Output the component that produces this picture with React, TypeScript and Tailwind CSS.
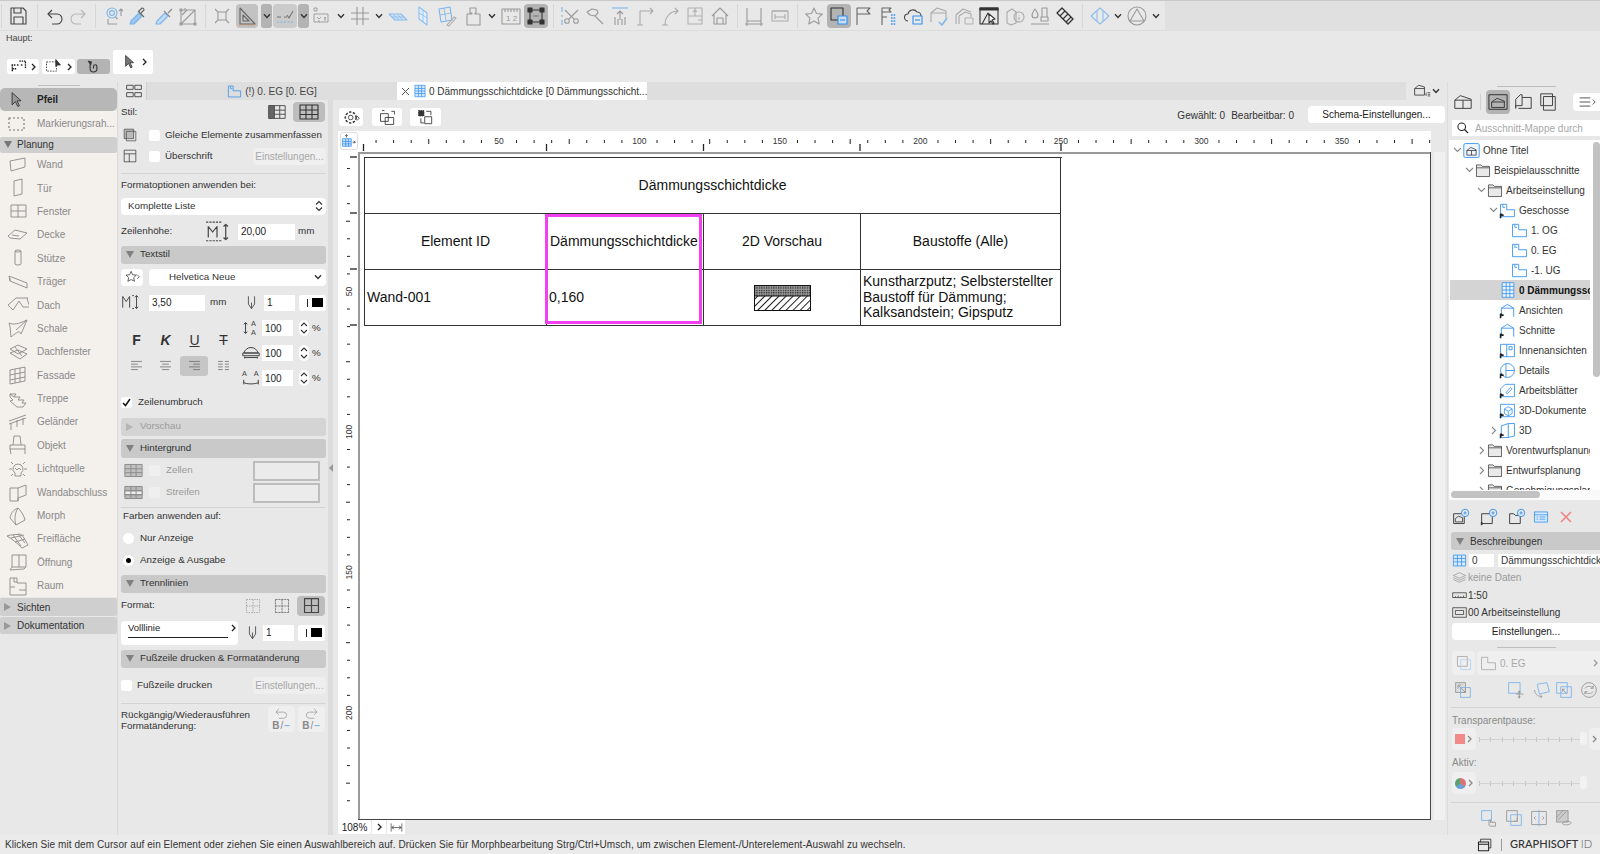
import React from "react";

const F = "font-['Liberation_Sans',Arial,sans-serif]";

// small svg helper, everything drawn on a 22 box unless told otherwise
function Ic({
  s = 22,
  c = "text-[#9a9a9a]",
  children,
  className = "",
}: {
  s?: number;
  c?: string;
  children: React.ReactNode;
  className?: string;
}) {
  return (
    <svg
      width={s}
      height={s}
      viewBox="0 0 22 22"
      fill="none"
      stroke="currentColor"
      strokeWidth="1.1"
      strokeLinejoin="round"
      className={`shrink-0 ${c} ${className}`}
    >
      {children}
    </svg>
  );
}

const BL = "#7db4ea";
const BB = "#2f8ff0";

function Chev({ className = "" }: { className?: string }) {
  return (
    <svg width="8" height="6" viewBox="0 0 8 6" fill="none" stroke="#333" strokeWidth="1.4" className={`shrink-0 ${className}`}>
      <path d="M1 1.2 4 4.4l3-3.2" />
    </svg>
  );
}

function Gt({ c = "#222", className = "" }: { c?: string; className?: string }) {
  return (
    <svg width="5" height="8" viewBox="0 0 5 8" fill="none" stroke={c} strokeWidth="1.3" className={`shrink-0 ${className}`}>
      <path d="m1 1 3 3-3 3" />
    </svg>
  );
}

function Sep({ className = "" }: { className?: string }) {
  return <div className={`w-px h-[24px] bg-[#d6d6d6] shrink-0 ${className}`} />;
}

function Drop({ className }: { className: string }) {
  return (
    <div className={`w-[11px] h-[24px] rounded-[3px] bg-[#b3b3b3] flex items-center justify-center shrink-0 ${className}`}>
      <Chev />
    </div>
  );
}

function TopToolbar() {
  return (
    <div className="h-[31px] flex border-t border-[#c9c9c9] shrink-0">
      <div className="w-[1165px] h-[30px] flex items-center border-b border-[#dcdcdc]">
        <Sep className="ml-[1px]" />
        <Ic c="text-[#444] ml-[5px]"><path d="M4 3h12l3 3v13H4z" /><path d="M7 3v5h7V3M7 19v-7h9v7" /></Ic>
        <Sep className="ml-[8px]" />
        <Ic c="text-[#444] ml-[5px]"><path d="M5 9h9a5 5 0 0 1 0 10H9" /><path d="M9 5 5 9l4 4" /></Ic>
        <Ic c="text-[#b5b5b5] ml-[3px]"><path d="M17 9H8a5 5 0 0 0 0 10h5" /><path d="m13 5 4 4-4 4" /></Ic>
        <Sep className="ml-[5px]" />
        <Ic c="text-[#9a9a9a] ml-[7px]"><circle cx="9" cy="8" r="5" stroke={BL} /><circle cx="9" cy="8" r="2.4" stroke={BL} /><path d="m12.5 12 2 2M18 11V4M16 6l2-2 2 2M5 14v5h9" /></Ic>
        <Ic c="text-[#666] ml-[2px]"><path d="m3 19 1-3 8-8 3 3-8 8z" fill="#9cc6f0" stroke={BL} /><path d="m11 6 6 6M14 8l3-3a1.8 1.8 0 0 0-2-2l-3 3" /></Ic>
        <Ic c="text-[#888] ml-[4px]"><path d="m3 19 1-3 8-8 3 3-8 8z" fill="#c0dcf6" stroke={BL} /><path d="m11 6 6 6M15 8l4-4" /></Ic>
        <Ic c="text-[#9a9a9a] ml-[2px]"><rect x="4" y="5" width="14" height="14" /><path d="m4 19 14-14M8 5V3M5 10l5-5" /><rect x="3" y="4" width="2" height="2" /><rect x="3" y="18" width="2" height="2" /><rect x="17" y="18" width="2" height="2" /></Ic>
        <Sep className="ml-[6px]" />
        <Ic c="text-[#9a9a9a] ml-[5px]"><rect x="7" y="7" width="8" height="8" /><path d="m4 4 3 3M18 4l-3 3M4 18l3-3M18 18l-3-3" /></Ic>
        <div className="w-[22px] h-[24px] ml-[3px] rounded-[4px] bg-[#c2c2c2] flex items-center justify-center shrink-0">
          <Ic c="text-[#666]"><path d="M4 3v16h15z" /><path d="M7 10v6h6z" /><path d="M3 20h16" stroke="#d98a4b" strokeDasharray="1.5 1.5" /></Ic>
        </div>
        <Drop className="ml-[3px]" />
        <div className="w-[24px] h-[24px] ml-[1px] rounded-[4px] bg-[#cbcbcb] flex items-center justify-center shrink-0">
          <Ic c="text-[#777]"><path d="M3 12h4M10 12h3M13 10l2 3 4-7" /><path d="M3 17h16" stroke={BL} strokeDasharray="2 1.5" /></Ic>
        </div>
        <Drop className="ml-[1px]" />
        <Ic c="text-[#999] ml-[3px]"><path d="M2 3h3v3H2zM2 9h14v8H2z" strokeWidth="0.9" /><path d="M5 12l2 2M9 12l-2 2M6 16h2M12 12l1 2 1-2M13 14v2M18 12v.1M18 15v.1" strokeWidth="0.9" /></Ic>
        <Chev className="ml-[3px]" />
        <Ic c="text-[#999] ml-[4px]"><path d="M2 8h18M2 14h18M8 2v18M14 2v18" /></Ic>
        <Chev className="ml-[4px]" />
        <Ic c="text-[#8cbdee] ml-[4px]"><path d="M2 9h12l6 6H8z" fill="#cfe2f6" /><path d="M5 12h12M6 9l6 6M10 9l6 6" strokeWidth=".8" /></Ic>
        <Ic c="text-[#8cbdee] ml-[3px]"><path d="M7 2l8 6v12l-8-6z" fill="#e3eefa" /><path d="M11 5v12M7 8l8 5" strokeWidth=".8" /></Ic>
        <Ic c="text-[#aaa] ml-[1px]"><path d="M4 4l11-2 2 13-11 2z" stroke={BL} /><path d="M9 3l2 13M5 10l11-2" stroke={BL} strokeWidth=".8" /><path d="m12 20 7-8 2 1-7 8z" /></Ic>
        <Ic c="text-[#9a9a9a] ml-[5px]"><path d="M8 3h6v5h-1v1h5v11H5V9h5V8H8z" /></Ic>
        <Chev className="ml-[4px]" />
        <Ic c="text-[#9a9a9a] ml-[4px]"><rect x="2" y="4" width="18" height="15" /><path d="M5 4v3M8 4v3M11 4v3M14 4v3M17 4v3" /><text x="6" y="16" fontSize="8" stroke="none" fill="currentColor">1 2</text></Ic>
        <div className="w-[24px] h-[24px] ml-[2px] rounded-[4px] bg-[#b3b3b3] flex items-center justify-center shrink-0">
          <Ic c="text-[#333]"><rect x="5" y="5" width="12" height="12" /><rect x="3" y="3" width="4" height="4" fill="#333" /><rect x="15" y="3" width="4" height="4" fill="#333" /><rect x="3" y="15" width="4" height="4" fill="#333" /><rect x="15" y="15" width="4" height="4" fill="#333" /><path d="M8 11h6" stroke="#7a7a7a" /></Ic>
        </div>
        <Sep className="ml-[5px]" />
        <Ic c="text-[#9a9a9a] ml-[5px]"><path d="M3 2v5M3 10v2M3 15v5" stroke={BL} /><circle cx="8" cy="16" r="2.3" /><circle cx="17" cy="16" r="2.3" /><path d="m10 14 9-9M15 14 6 5" /></Ic>
        <Ic c="text-[#9a9a9a] ml-[3px]"><path d="m8 4 5 1 1 3-3 3-5-1-3-3zM11 11l8 8" /></Ic>
        <Ic c="text-[#9a9a9a] ml-[3px]"><path d="M3 3h16" stroke={BL} /><path d="M11 15V6M8 9l3-3 3 3M6 12v8M9 14v6M13 14v6M16 12v8" /></Ic>
        <Ic c="text-[#aaa] ml-[3px]"><path d="M6 20V6h13M16 3l3 3-3 3M3 20h6" /></Ic>
        <Ic c="text-[#aaa] ml-[3px]"><path d="M6 20c0-8 5-14 13-14M16 3l3 3-3 3M3 20h6" /></Ic>
        <Ic c="text-[#b0b0b0] ml-[3px]"><rect x="4" y="3" width="14" height="16" /><path d="M4 11h14M11 3v8M11 9V5M9 7l2-2 2 2M14 15h4" /></Ic>
        <Ic c="text-[#9a9a9a] ml-[3px]"><path d="M3 11 11 3l8 8M5 9v10h12V9M8 13h6v6H8z" /></Ic>
        <Sep className="ml-[6px]" />
        <Ic c="text-[#9a9a9a] ml-[5px]"><path d="M4 3v13h14V3M4 19h14M2 19h2M18 19h2M4 16v5M18 16v5M7 19l-2 0" /></Ic>
        <Ic c="text-[#aaa] ml-[4px]"><rect x="3" y="6" width="16" height="10" /><path d="M6 9v5M16 9v5M6 12h10M3 6h16" /></Ic>
        <Sep className="ml-[6px]" />
        <Ic c="text-[#9a9a9a] ml-[5px]"><path d="m11 3 2.5 5.500 5.800.6-4.300 4 1.200 5.800L11 16l-5.200 2.900L7 13.100l-4.300-4 5.800-.6z" /></Ic>
        <div className="w-[24px] h-[24px] ml-[2px] rounded-[4px] bg-[#b3b3b3] flex items-center justify-center shrink-0">
          <Ic c="text-[#333]"><rect x="3" y="3" width="12" height="12" /><rect x="10" y="11" width="9" height="8" fill="#c9def5" stroke={BB} /><path d="M12 15h5" stroke={BB} /></Ic>
        </div>
        <Ic c="text-[#666] ml-[1px]"><path d="M5 20V3h13l-3 3 3 3H5" /></Ic>
        <Ic c="text-[#666] ml-[3px]"><path d="M5 20V3h9l-2 2 2 2H5M5 12h5" /><path d="M14 10h5M14 13h5M14 16h5M14 19h5" stroke={BB} strokeWidth="1.6" strokeDasharray="1.6 1" /></Ic>
        <Ic c="text-[#444] ml-[4px]"><path d="M5 16a3.500 3.500 0 0 1 0-7 5 5 0 0 1 9-2 4 4 0 0 1 4 4" /><rect x="10" y="11" width="9" height="8" stroke={BB} /><path d="M12 15h5" stroke={BB} /></Ic>
        <Ic c="text-[#aaa] ml-[3px]"><path d="M3 17V8l6-5 9 3v7M3 8h15" /><path d="m11 17 3 3 5-7" stroke={BL} strokeWidth="1.5" /></Ic>
        <Ic c="text-[#aaa] ml-[3px]"><path d="M3 19v-9l7-6 8 3M6 19v-8l6-4 6 2v3" /><rect x="12" y="13" width="8" height="6" strokeWidth=".9" /></Ic>
        <Ic c="text-[#333] ml-[3px]"><rect x="2" y="3" width="18" height="16" /><path d="M2 3h18v2H2z" fill="#333" /><path d="m4 19 6-11 6 11" /><path d="m11 9 6 5-3 1 2 3-1 1-2-3-2 2z" fill="#fff" /></Ic>
        <Ic c="text-[#aaa] ml-[4px]"><path d="M3 7l5-3 4 3v11l-5 2-4-2z" /><circle cx="15" cy="12" r="5" /><path d="M15 10v.5M15 12v3" /></Ic>
        <Ic c="text-[#999] ml-[3px]"><path d="M6 4c-2 3-3 4-3 6a3 3 0 0 0 6 0c0-2-1-3-3-6z" /><path d="M13 12V3h5v9zM12 12h7v4h-7zM2 19h18" /></Ic>
        <Ic c="text-[#333] ml-[3px]"><path d="m3 8 5-5 11 11-5 5z" strokeWidth="1.400" /><path d="m6 11 5-5M9 14l5-5M12 17l5-5" /></Ic>
        <Sep className="ml-[6px]" />
        <Ic c="text-[#8cbdee] ml-[6px]"><path d="m2 11 9-8 9 8-9 8z" /><path d="M8 6v10M14 6v10" /></Ic>
        <Chev className="ml-[3px]" />
        <Ic c="text-[#9a9a9a] ml-[4px]"><circle cx="11" cy="11" r="9" /><path d="m11 4 7 12H4z" /></Ic>
        <Chev className="ml-[4px]" />
      </div>
      <div className="flex-1 bg-[#e0e0e0]" />
    </div>
  );
}

function HauptRow() {
  return (
    <div className="h-[51px] shrink-0">
      <div className="pl-[6px] pt-[1px] text-[9px] text-[#444] h-[13px] leading-[13px]">Haupt:</div>
      <div className="flex items-end h-[30px] pl-[7px]">
        <div className="w-[32px] h-[15px] rounded-[3px] bg-white flex items-center justify-between pl-[3px] pr-[3px]">
          <Ic s={17} c="text-[#222]"><path d="M2 9h5M9 9h3M14 9h3M3 9v9M3 14h6M12 4h8v9" strokeDasharray="2 1" strokeWidth="1.800" /></Ic>
          <Gt />
        </div>
        <div className="w-[33px] h-[15px] ml-[3px] rounded-[3px] bg-white flex items-center justify-between px-[3px]">
          <Ic s={17} c="text-[#333]"><rect x="2" y="5" width="13" height="12" strokeDasharray="2 1.500" /><path d="M14 2v9l2-2 4 0z" fill="#333" /></Ic>
          <Gt />
        </div>
        <div className="w-[33px] h-[15px] ml-[2px] rounded-[3px] bg-[#b3b3b3] flex items-center justify-center">
          <Ic s={15} c="text-[#333]"><path d="M6 8v6a5 5 0 0 0 10 0v-3a2.500 2.500 0 0 0-5 0v3" strokeWidth="1.600" /><path d="m3 3 5 1-1 5z" fill="#333" /></Ic>
        </div>
        <div className="w-[40px] h-[24px] ml-[3px] rounded-[3px] bg-white flex items-center justify-between pl-[9px] pr-[6px]">
          <Ic s={16} c="text-[#333]"><path d="M5 2v15l4-4 3 6 2-1-3-6h5z" fill="#777" /></Ic>
          <Gt />
        </div>
      </div>
    </div>
  );
}

const tools: [string, React.ReactNode][] = [
  ["Wand", <path key="a" d="M3 7l15-3v9L4 17z" />],
  ["Tür", <path key="a" d="M7 4l8-2v15l-8 2zM13 10v.1" />],
  ["Fenster", <path key="a" d="M4 5h15v12H4zM11 5v12M4 11h15" />],
  ["Decke", <path key="a" d="M1 12l7-6 12 3-7 6-10-1zM5 11l7 1" />],
  ["Stütze", <path key="a" d="M8 4a3 1 0 0 1 6 0v13a3 1 0 0 1-6 0zM8 4a3 1 0 0 0 6 0" />],
  ["Träger", <path key="a" d="M2 5l18 7v5L3 10zM3 7v3" />],
  ["Dach", <path key="a" d="M1 11l8-7 12 0-1 1 3 8-7 0-4-6-6 9z" />],
  ["Schale", <path key="a" d="M2 6c5 2 9 1 18-3-2 4-4 10-6 14-1-4-4-2-10 3-1-5 0-9-2-14zM9 13l11-10" />],
  ["Dachfenster", <path key="a" d="M3 8l8-4 9 4-9 5zM3 12l8-3 9 4-7 5zM8 6l7 9" />],
  ["Fassade", <path key="a" d="M3 6l15-3v14L3 20zM8 5v14M13 4v14M3 11l15-3M3 16l15-3" />],
  ["Treppe", <path key="a" d="M3 6h6l-2 3h6l-2 3h6l-2 3h4l-3 4h-6l-7-6 3-1-3-3zM7 9l-4-3" />],
  ["Geländer", <path key="a" d="M2 10l17-6M2 13l17-6M4 12v7M10 9v7M16 7v7" />],
  ["Objekt", <path key="a" d="M7 2h6l1 9h-8zM6 11H3v4l1 5M3 15h15v5M14 11h4v4" />],
  ["Lichtquelle", <path key="a" d="M11 6a5 5 0 0 1 3 9v3H8v-3a5 5 0 0 1 3-9zM2 11h3M17 11h3M4 4l2 2M18 4l-2 2M4 18l2-2M18 18l-2-2M8 10l2 2 2-2 2 2" />],
  ["Wandabschluss", <path key="a" d="M3 7h8l8-3v10l-8 3v3H3zM11 7v13" />],
  ["Morph", <path key="a" d="M3 13c1-5 3-8 8-10 4 4 6 8 7 12l-9 5z M9 20c-2-6-1-12 2-17" />],
  ["Freifläche", <path key="a" d="M0 8c5-2 9-1 13-2 3 1 5 6 8 11l-6 3C10 15 5 11 0 8zM6 7l8 11M11 6l7 9M4 10l13-3M8 14l10-3" />],
  ["Öffnung", <path key="a" d="M5 4h14v12H5zM5 16l-2 3 14-1 2-2M12 4v12" />],
  ["Raum", <path key="a" d="M3 3h7v5h9v12H3zM7 3v4h3M3 12h5M12 15h7" />],
];

function Triangle({ open = true, c = "border-t-[#777]" }: { open?: boolean; c?: string }) {
  return open ? (
    <span className={`block w-0 h-0 border-l-[4.500px] border-r-[4.500px] border-t-[7px] border-l-transparent border-r-transparent ${c} shrink-0`} />
  ) : (
    <span className={`block w-0 h-0 border-t-[4.500px] border-b-[4.500px] border-l-[7px] border-t-transparent border-b-transparent ${c} shrink-0`} />
  );
}

function Sidebar() {
  return (
    <div className="w-[118px] shrink-0 border-r border-[#dadada]">
      <div className="h-[6px] flex items-end justify-center"><div className="w-[42px] h-px bg-[#c0c0c0] mb-[2px]" /></div>
      <div className="h-[23px] rounded-[5px] bg-[#b7b7b7] flex items-center text-[10px] font-bold text-[#222] w-[117px]">
        <div className="w-[37px] flex justify-center pr-[3px]"><Ic s={18} c="text-[#333]"><path d="M5 2v15l4-4 3 6 2-1-3-6h5z" fill="#999" /></Ic></div>
        Pfeil
      </div>
      <div className="bg-[#f4f0ec] w-[117px]">
        <div className="h-[25.500px] flex items-center text-[10px] text-[#8a8a8a]">
          <div className="w-[37px] flex justify-center pr-[3px]"><Ic c="text-[#777]"><rect x="3" y="5" width="15" height="12" strokeDasharray="2 2" /></Ic></div>
          Markierungsrah...
        </div>
        <div className="h-[16.500px] bg-[#cfcfcf] rounded-[2px] flex items-center text-[10px] text-[#333]">
          <div className="w-[17px] pl-[4px]"><Triangle /></div>Planung
        </div>
        {tools.map(([name, icon]) => (
          <div key={name} className="h-[23.400px] flex items-center text-[10px] text-[#8a8a8a]">
            <div className="w-[37px] flex justify-center pr-[1px]"><Ic c="text-[#8a8a8a]" className="[stroke-width:0.9]">{icon}</Ic></div>
            {name}
          </div>
        ))}
      </div>
      <div className="w-[117px]">
        <div className="h-[18px] mt-[1px] bg-[#cfcfcf] rounded-[2px] flex items-center text-[10px] text-[#333]"><div className="w-[17px] pl-[4px]"><Triangle open={false} c="border-l-[#999]" /></div>Sichten</div>
        <div className="h-[17px] mt-[1px] bg-[#cfcfcf] rounded-[2px] flex items-center text-[10px] text-[#333]"><div className="w-[17px] pl-[4px]"><Triangle open={false} c="border-l-[#999]" /></div>Dokumentation</div>
      </div>
    </div>
  );
}

function Check({ on = false, dim = false, className = "" }: { on?: boolean; dim?: boolean; className?: string }) {
  return (
    <span className={`w-[11px] h-[11px] rounded-[2.500px] ${dim ? "bg-[#efefef]" : "bg-white"} flex items-center justify-center shrink-0 text-[#111] ${className}`}>
      {on && <svg width="9" height="9" viewBox="0 0 9 9" fill="none" stroke="#111" strokeWidth="1.5"><path d="M1 5l2.500 2.500L8 1" /></svg>}
    </span>
  );
}

function Head({ label, dim = false, open = true, className = "" }: { label: string; dim?: boolean; open?: boolean; className?: string }) {
  return (
    <div className={`h-[18px] rounded-[3px] flex items-center ${dim ? "bg-[#d4d4d4] text-[#9c9c9c]" : "bg-[#c9c9c9] text-[#333]"} ${className}`}>
      <div className="w-[19px] pl-[5px]">
        {open ? <Triangle c="border-t-[#808080]" /> : <Triangle open={false} c="border-l-[#b5b5b5]" />}
      </div>
      {label}
    </div>
  );
}

function Field({ v, className }: { v: string; className: string }) {
  return <div className={`h-[16px] bg-white flex items-center pl-[3px] text-[10px] text-[#222] shrink-0 ${className}`}>{v}</div>;
}

function PenIc({ className = "" }: { className?: string }) {
  return <Ic s={17} c="text-[#444]" className={className}><path d="M7 3v10l4 6 4-6V3" /><path d="M11 19v-8" /></Ic>;
}

function ColorBtn({ className = "" }: { className?: string }) {
  return (
    <div className={`w-[27px] h-[16px] bg-white rounded-[3px] flex items-center justify-end pr-[3px] gap-[4px] shrink-0 ${className}`}>
      <span className="w-px h-[8px] bg-[#222]" />
      <span className="w-[11px] h-[9px] bg-black" />
    </div>
  );
}

function Stepper() {
  return (
    <div className="ml-[6px] w-[10px] h-[16px] rounded-[5px] bg-white flex flex-col items-center justify-center shrink-0">
      <svg width="8" height="14" viewBox="0 0 8 14" fill="none" stroke="#333" strokeWidth="1.1"><path d="M1 5 4 2l3 3M1 9l3 3 3-3" /></svg>
    </div>
  );
}

function GreyBtn({ className }: { className: string }) {
  return <div className={`h-[17px] rounded-[4px] bg-[#efefef] flex items-center justify-center text-[10px] text-[#a8a8a8] shrink-0 ${className}`}>Einstellungen...</div>;
}

function Panel() {
  return (
    <div className="w-[210px] shrink-0 pl-[3px] pr-[2px] text-[9.8px] text-[#333]">
      <div className="h-[24px] flex items-center">
        <span className="w-[146px]">Stil:</span>
        <Ic s={20} c="text-[#555]"><path d="M2 4h18v14H2zM2 9h18M2 13.500h18M8 4v14M14 4v14" /><rect x="2" y="4" width="6" height="14" fill="#666" /></Ic>
        <div className="w-[32px] h-[20px] rounded-[4px] bg-[#bdbdbd] flex items-center justify-center ml-[6px]"><Ic c="text-[#333]"><path d="M2 4h18v14H2zM2 9h18M2 13.500h18M8 4v14M14 4v14" /></Ic></div>
      </div>
      <div className="h-[22px] flex items-center">
        <Ic s={16} c="text-[#555]" className="ml-[1px]"><rect x="3" y="3" width="13" height="13" fill="#bbb" /><rect x="6" y="6" width="13" height="13" /></Ic>
        <Check className="ml-[11px]" />
        <span className="ml-[5px] whitespace-nowrap">Gleiche Elemente zusammenfassen</span>
      </div>
      <div className="h-[20px] flex items-center">
        <Ic s={16} c="text-[#444]" className="ml-[1px]"><path d="M3 3h16v16H3zM3 8h16M10 8v11" /></Ic>
        <Check className="ml-[11px]" />
        <span className="ml-[5px] flex-1">Überschrift</span>
        <GreyBtn className="w-[73px]" />
      </div>
      <div className="h-px bg-[#d4d4d4] mt-[6.500px]" />
      <div className="h-[24px] flex items-center">Formatoptionen anwenden bei:</div>
      <div className="h-[17px] rounded-[4px] bg-white flex items-center pl-[7px] pr-[3px] justify-between text-[#333]">
        Komplette Liste
        <svg width="8" height="12" viewBox="0 0 8 12" fill="none" stroke="#333" strokeWidth="1.2"><path d="M1 4.500 4 1.500l3 3M1 7.500l3 3 3-3" /></svg>
      </div>
      <div className="h-[16px] mt-[9px] flex items-center">
        <span className="w-[84px]">Zeilenhöhe:</span>
        <Ic s={24} c="text-[#444]"><path d="M1 2h14M1 19h14" strokeDasharray="2 1" /><path d="M3 16V6l4 5 4-5v10M19 4v14M17 6l2-2 2 2M17 16l2 2 2-2" /></Ic>
        <Field v="20,00" className="ml-[9px] w-[57px]" />
        <span className="ml-[3px]">mm</span>
      </div>
      <Head label="Textstil" className="mt-[6px]" />
      <div className="h-[17px] mt-[5px] flex">
        <div className="w-[22px] rounded-[4px] bg-white flex items-center justify-center"><Ic s={15} c="text-[#333]"><path d="m9 2 2.200 5 5.500.5-4 3.700 1.200 5.300L9 14l-4.800 2.500 1.200-5.300-4-3.700L6.800 7z" /><path d="m18 7 3 3-3 3" /></Ic></div>
        <div className="ml-[6px] flex-1 rounded-[4px] bg-white flex items-center pl-[20px] pr-[4px] justify-between">Helvetica Neue<Chev /></div>
      </div>
      <div className="h-[16px] mt-[9px] flex items-center">
        <Ic s={19} c="text-[#444]"><path d="M2 17V4l4 6 4-6v13M13 3h2M13 18h2M18 3v15M16 5l2-2 2 2M16 16l2 2 2-2" /></Ic>
        <Field v="3,50" className="ml-[9px] w-[56px]" />
        <span className="ml-[5px] w-[38px]">mm</span>
        <PenIc className="ml-[-2px]" />
        <Field v="1" className="ml-[4px] w-[31px]" />
        <ColorBtn className="ml-[4px]" />
      </div>
      <div className="flex h-[75px] mt-[5px]">
        <div className="w-[120px] pt-[12.500px]">
          <div className="h-[24px] flex items-center text-[#333]">
            <span className="w-[29px] ml-[1px] text-center text-[14px] font-bold">F</span>
            <span className="w-[29px] text-center text-[14px] italic font-bold">K</span>
            <span className="w-[29px] text-center text-[14px] underline">U</span>
            <span className="w-[29px] text-center text-[14px] line-through">T</span>
          </div>
          <div className="h-[25px] flex items-center mt-[1px]">
            {[0, 1, 2, 3].map((i) => (
              <div key={i} className={`w-[28px] h-[20px] ml-[1px] rounded-[3px] flex items-center justify-center ${i === 2 ? "bg-[#c6c6c6]" : ""}`}>
                <Ic s={15} c="text-[#666]">
                  {i === 0 && <path d="M3 5h16M3 9h10M3 13h16M3 17h10" />}
                  {i === 1 && <path d="M3 5h16M6 9h10M3 13h16M6 17h10" />}
                  {i === 2 && <path d="M3 5h16M9 9h10M3 13h16M9 17h10" />}
                  {i === 3 && <path d="M3 5h7M13 5h6M3 9h7M13 9h6M3 13h7M13 13h6M3 17h7M13 17h6" />}
                </Ic>
              </div>
            ))}
          </div>
        </div>
        <div>
          {[0, 1, 2].map((i) => (
            <div key={i} className="h-[25px] flex items-center">
              <Ic s={20} c="text-[#444]">
                {i === 0 && <><path d="M5 5v12M3 7l2-2 2 2M3 15l2 2 2-2" /><text x="11" y="9" fontSize="8" stroke="none" fill="currentColor">A</text><text x="11" y="19" fontSize="8" stroke="none" fill="currentColor">A</text></>}
                {i === 1 && <path d="M3 11c2-4 4-6 8-6s6 2 8 6H3zM2 11h18v3H2zM4 16h14M4 15v2M18 15v2" />}
                {i === 2 && <><text x="1" y="9" fontSize="8" stroke="none" fill="currentColor">A</text><text x="14" y="9" fontSize="8" stroke="none" fill="currentColor">A</text><path d="M3 16c3 2 13 2 16 0M3 13v5M19 13v5" /></>}
              </Ic>
              <Field v="100" className="ml-[1px] w-[31px]" />
              <Stepper />
              <span className="ml-[3px]">%</span>
            </div>
          ))}
        </div>
      </div>
      <div className="h-[12px] mt-[6px] flex items-center">
        <Check on />
        <span className="ml-[6px]">Zeilenumbruch</span>
      </div>
      <Head label="Vorschau" dim open={false} className="mt-[9px]" />
      <Head label="Hintergrund" className="mt-[3px] h-[19px]" />
      <div className="h-[20px] mt-[3px] flex items-center">
        <Ic s={19} c="text-[#8a8a8a]" className="ml-[3px]"><rect x="1" y="4" width="20" height="14" fill="#c2c2c2" /><path d="M1 9h20M1 13.500h20M8 4v14M14 4v14" /></Ic>
        <Check dim className="ml-[6px]" />
        <span className="ml-[6px] flex-1 text-[#9a9a9a]">Zellen</span>
        <div className="w-[67px] h-[20px] mr-[6px] border-2 border-[#bdbdbd] bg-[#ebebeb]" />
      </div>
      <div className="h-[20px] mt-[2px] flex items-center">
        <Ic s={19} c="text-[#8a8a8a]" className="ml-[3px]"><rect x="1" y="4" width="20" height="14" fill="#b8b8b8" /><rect x="1" y="9" width="20" height="4.500" fill="#f0f0f0" /><path d="M1 9h20M1 13.500h20M8 4v14M14 4v14" /></Ic>
        <Check dim className="ml-[6px]" />
        <span className="ml-[6px] flex-1 text-[#9a9a9a]">Streifen</span>
        <div className="w-[67px] h-[20px] mr-[6px] border-2 border-[#bdbdbd] bg-[#ebebeb]" />
      </div>
      <div className="h-px bg-[#d4d4d4] mt-[4px]" />
      <div className="h-[18px] pl-[2px] flex items-center">Farben anwenden auf:</div>
      <div className="h-[18px] mt-[4px] flex items-center pl-[2px]">
        <span className="w-[11px] h-[11px] rounded-full bg-white" />
        <span className="ml-[6px]">Nur Anzeige</span>
      </div>
      <div className="h-[18px] mt-[4px] flex items-center pl-[2px]">
        <span className="w-[11px] h-[11px] rounded-full bg-white flex items-center justify-center"><span className="w-[5px] h-[5px] rounded-full bg-black" /></span>
        <span className="ml-[6px]">Anzeige &amp; Ausgabe</span>
      </div>
      <Head label="Trennlinien" className="mt-[5px]" />
      <div className="h-[20px] mt-[3px] flex items-center">
        <span className="w-[124px]">Format:</span>
        <Ic s={16} c="text-[#999]"><path d="M2 2h18v18H2zM2 11h18M11 2v18" strokeDasharray="2 1.500" /></Ic>
        <Ic s={16} c="text-[#666]" className="ml-[13px]"><path d="M2 2h18M2 20h18M2 11h18M11 2v18M2 2v18M20 2v18" strokeDasharray="3 1" /></Ic>
        <div className="w-[28px] h-[20px] ml-[7px] rounded-[4px] bg-[#bdbdbd] flex items-center justify-center"><Ic s={17} c="text-[#444]"><path d="M2 2h18v18H2zM2 11h18M11 2v18" strokeWidth="1.500" /></Ic></div>
      </div>
      <div className="h-[24px] mt-[5px] flex items-center">
        <div className="w-[117px] h-[24px] rounded-[4px] bg-white px-[7px] relative">
          <div className="text-[9.5px] leading-[14px] text-[#222]">Volllinie</div>
          <div className="h-px bg-[#222] w-[100px] mt-[2px]" />
          <Gt className="absolute right-[2px] top-[3px]" />
        </div>
        <PenIc className="ml-[6px]" />
        <Field v="1" className="ml-[2px] w-[31px]" />
        <ColorBtn className="ml-[4px]" />
      </div>
      <Head label="Fußzeile drucken & Formatänderung" className="mt-[5px]" />
      <div className="h-[16px] mt-[10px] flex items-center">
        <Check />
        <span className="ml-[5px] flex-1">Fußzeile drucken</span>
        <GreyBtn className="w-[73px]" />
      </div>
      <div className="h-px bg-[#d4d4d4] mt-[9px]" />
      <div className="h-[26px] mt-[2px] flex">
        <div className="w-[147px] pt-[3px] leading-[11px]">Rückgängig/Wiederausführen<br />Formatänderung:</div>
        <UndoBtn />
        <UndoBtn flip className="ml-[3px]" />
      </div>
    </div>
  );
}

function UndoBtn({ flip = false, className = "" }: { flip?: boolean; className?: string }) {
  return (
    <div className={`w-[27px] h-[26px] rounded-[4px] bg-[#efefef] flex flex-col items-center shrink-0 ${className}`}>
      <Ic s={15} c="text-[#999]" className={flip ? "-scale-x-100" : ""}><path d="M3 9h11a4.500 4.500 0 0 1 0 9H7M7 4 3 9l4 4" /></Ic>
      <div className="text-[10px] font-bold text-[#888] leading-[10px] tracking-[1px]">B<span className="font-normal">/</span><span className="text-[#7db4ea]">–</span></div>
    </div>
  );
}

const TICK = 17.56;

function HRuler() {
  const ticks = Array.from({ length: 62 }, (_, k) => k);
  return (
    <svg width="1073" height="21" className="block shrink-0">
      {ticks.map((k) => {
        const x = 0.5 + TICK * k;
        if (k === 0) return null;
        if (k % 8 === 0)
          return <text key={k} x={x} y="13" textAnchor="middle" fontSize="8.5" fill="#333" fontFamily="Liberation Sans">{(k / 8) * 50}</text>;
        return <line key={k} x1={x} x2={x} y1={k % 4 === 0 ? 8 : 9} y2={k % 4 === 0 ? 13 : 12} stroke="#222" strokeWidth="1" />;
      })}
      {[5.5, 188.5, 345.5, 502, 703].map((x) => (
        <line key={x} x1={x} x2={x} y1="13" y2="20" stroke="#222" strokeWidth="1.3" />
      ))}
    </svg>
  );
}

function VRuler() {
  const ticks = Array.from({ length: 38 }, (_, k) => k);
  return (
    <svg width="20" height="668" className="block shrink-0">
      {ticks.map((k) => {
        const y = -1 + TICK * k;
        if (k === 0) return null;
        if (k % 8 === 0)
          return <text key={k} transform={`translate(13.5 ${y}) rotate(-90)`} textAnchor="middle" fontSize="8.5" fill="#333" fontFamily="Liberation Sans">{(k / 8) * 50}</text>;
        return <line key={k} x1={k % 4 === 0 ? 8 : 9} x2="12" y1={y} y2={y} stroke="#222" strokeWidth="1" />;
      })}
      {[5, 61, 117, 173].map((y) => (
        <line key={y} x1="12" x2="19" y1={y} y2={y} stroke="#222" strokeWidth="1.3" />
      ))}
    </svg>
  );
}

function Hatch() {
  return (
    <svg width="57" height="26" viewBox="0 0 57 26">
      <defs>
        <pattern id="cross" width="2.4" height="2.4" patternUnits="userSpaceOnUse">
          <rect width="2.4" height="2.4" fill="#9a9a9a" />
          <rect width="1.2" height="1.2" fill="#1b1b1b" />
        </pattern>
        <pattern id="diag" width="5" height="5" patternUnits="userSpaceOnUse" patternTransform="rotate(45)">
          <rect width="5" height="5" fill="#fff" />
          <rect width="1" height="5" fill="#222" />
        </pattern>
      </defs>
      <rect x="0.5" y="0.5" width="56" height="25" fill="#fff" stroke="#111" />
      <rect x="1" y="1" width="55" height="10" fill="url(#cross)" />
      <rect x="1" y="11" width="55" height="14" fill="url(#diag)" />
      <path d="M0 11h57" stroke="#111" />
    </svg>
  );
}

function Sheet() {
  const cell = "flex items-center border-[#333] whitespace-nowrap";
  return (
    <div className="relative w-[698px] text-[14px] text-[#111] leading-[15.5px]">
      <div className="grid grid-cols-[182px_157px_157px_200px] grid-rows-[56px_56px_56px] border-l border-t border-[#333]">
        <div className={`${cell} col-span-4 justify-center border-r border-b`}>Dämmungsschichtdicke</div>
        <div className={`${cell} justify-center border-r border-b`}>Element ID</div>
        <div className={`${cell} border-r border-b pl-[3px]`}>Dämmungsschichtdicke</div>
        <div className={`${cell} justify-center border-r border-b`}>2D Vorschau</div>
        <div className={`${cell} justify-center border-r border-b`}>Baustoffe (Alle)</div>
        <div className={`${cell} border-r border-b pl-[2px]`}>Wand-001</div>
        <div className={`${cell} border-r border-b pl-[2px]`}>0,160</div>
        <div className={`${cell} justify-center border-r border-b`}><Hatch /></div>
        <div className={`${cell} border-r border-b pl-[2px]`}>Kunstharzputz; Selbsterstellter<br />Baustoff für Dämmung;<br />Kalksandstein; Gipsputz</div>
      </div>
      <div className="absolute left-[181px] top-[57px] w-[157px] h-[110px] border-[3px] border-[#f23ff0] pointer-events-none" />
    </div>
  );
}

function Center() {
  return (
    <div className="flex-1 flex flex-col min-w-0 pl-[5px] text-[10px] text-[#333]">
      <div className="h-[31px] flex items-start pt-[8px]">
        <div className="w-[24px] h-[18px] ml-[1px] rounded-[3px] bg-white flex items-center justify-center">
          <Ic s={17} c="text-[#333]"><circle cx="10" cy="11" r="3" /><circle cx="10" cy="11" r="7" strokeDasharray="3 2" strokeWidth="2" /><path d="m18 9 3 3 -3 3" /></Ic>
        </div>
        <div className="w-[30px] h-[18px] ml-[9px] rounded-[3px] bg-white flex items-center justify-center">
          <Ic s={17} c="text-[#333]"><rect x="2" y="6" width="10" height="10" /><rect x="8" y="11" width="11" height="9" /><path d="M4 2h3M16 3h4v4" /></Ic>
        </div>
        <div className="w-[31px] h-[18px] ml-[8px] rounded-[3px] bg-white flex items-center justify-center">
          <Ic s={17} c="text-[#333]"><rect x="2" y="2" width="7" height="7" fill="#333" strokeDasharray="2 1" /><rect x="10" y="10" width="9" height="9" /><path d="M5 12v6h4M12 3h6v5" /></Ic>
        </div>
        <div className="ml-auto flex items-center h-[17px] mt-[-3px] pt-[1px]">
          <span className="pt-[3px]">Gewählt: 0</span>
          <span className="ml-[6px] pt-[3px]">Bearbeitbar: 0</span>
          <div className="ml-[14px] mr-[2px] w-[137px] h-[17px] rounded-[4px] bg-white flex items-center justify-center text-[#222]">Schema-Einstellungen...</div>
        </div>
      </div>
      <div className="bg-white mr-[16px] h-[21px] flex items-start">
        <div className="w-[20px] h-[21px] flex items-start justify-center pt-[1px] pl-[1px]">
          <div className="w-[18px] h-[18px] rounded-[3px] border border-[#dedede] flex items-center justify-center">
            <Ic s={15} c="text-[#2f8ff0]"><rect x="2" y="7" width="13" height="11" fill="#cfe3f8" /><path d="M2 11h13M2 14.500h13M7 7v11M11 7v11" /><path d="M8 5V1M6 3l2-2 2 2M17 12h4M19 10l2 2-2 2" stroke="#333" /></Ic>
          </div>
        </div>
        <HRuler />
      </div>
      <div className="flex h-[668px]">
        <div className="bg-white"><VRuler /></div>
        <div className="w-[1073px] h-[668px] bg-white border-l-2 border-t-2 border-[#9a9a9a] pl-[4px] pt-[3px] relative">
          <div className="absolute right-0 bottom-0 left-[-2px] top-[-2px] border-r border-b border-[#444] pointer-events-none" />
          <Sheet />
        </div>
        <div className="w-[3px]" />
        <div className="w-[11px] bg-[#f1f1f1]" />
      </div>
      <div className="h-[15px] flex items-start">
        <div className="w-[33px] h-[14px] bg-white rounded-[2px] flex items-center justify-center text-[#222]">108%</div>
        <div className="w-[14px] h-[14px] ml-[1px] bg-white flex items-center justify-center"><Gt /></div>
        <div className="w-[18px] h-[14px] ml-[1px] bg-white flex items-center justify-center">
          <Ic s={13} c="text-[#333]"><path d="M2 4v14M20 4v14M3 11h16M7 8l-4 3 4 3M15 8l4 3-4 3" /></Ic>
        </div>
      </div>
    </div>
  );
}

function TabBar() {
  return (
    <div className="h-[18px] flex shrink-0">
      <div className="w-[29px] flex items-center justify-center pl-[3px] border-r border-[#cfcfcf]">
        <Ic s={18} c="text-[#444]"><path d="M2 4h8v5H2zM12 4h8v5h-8zM2 13h8v5H2zM12 13h8v5h-8z" /></Ic>
      </div>
      <div className="w-[250px] bg-[#dedede] flex items-center justify-center text-[10px] text-[#444]">
        <Ic s={15} c="text-[#2f8ff0]" className="mr-[3px]"><path d="M2 3h7v7h11v9H2z" /><path d="M5 3v4h3" strokeWidth="1" /></Ic>
        (!) 0. EG [0. EG]
      </div>
      <div className="w-[250px] bg-white flex items-center text-[10px] text-[#333]">
        <svg width="11" height="11" viewBox="0 0 11 11" fill="none" stroke="#555" strokeWidth="1" className="ml-[3px] shrink-0"><path d="m2 2 7 7M9 2 2 9" /></svg>
        <Ic s={14} c="text-[#2f8ff0]" className="ml-[2px]"><rect x="3" y="2" width="16" height="18" fill="#d9e9fb" /><path d="M3 7h16M3 11h16M3 15h16M8.500 2v18M13.500 2v18" /></Ic>
        <span className="ml-[2px] whitespace-nowrap">0 Dämmungsschichtdicke [0 Dämmungsschicht...</span>
      </div>
      <div className="flex-1 bg-[#dedede]" />
      <div className="w-[41px] flex items-center pl-[7px]">
        <Ic s={18} c="text-[#444]"><path d="M2 16V8l5-4 7 2v10zM2 8h12" /><path d="M16 13v4" strokeWidth="1" /><path d="M18 13h3M18 15h3M18 17h3" strokeWidth="1" /></Ic>
        <Chev className="ml-[1px]" />
      </div>
    </div>
  );
}

type Row = { t: string; ind: string; kind: string; chev?: "open" | "closed"; sel?: boolean };

const rows: Row[] = [
  { t: "Ohne Titel", ind: "pl-[2px]", kind: "home", chev: "open" },
  { t: "Beispielausschnitte", ind: "pl-[14px]", kind: "folder", chev: "open" },
  { t: "Arbeitseinstellung", ind: "pl-[26px]", kind: "folder", chev: "open" },
  { t: "Geschosse", ind: "pl-[38px]", kind: "storyL", chev: "open" },
  { t: "1. OG", ind: "pl-[50px]", kind: "story" },
  { t: "0. EG", ind: "pl-[50px]", kind: "story" },
  { t: "-1. UG", ind: "pl-[50px]", kind: "story" },
  { t: "0 Dämmungsschichtdicke", ind: "pl-[39px]", kind: "table", sel: true },
  { t: "Ansichten", ind: "pl-[38px]", kind: "elev" },
  { t: "Schnitte", ind: "pl-[38px]", kind: "elev" },
  { t: "Innenansichten", ind: "pl-[38px]", kind: "inner" },
  { t: "Details", ind: "pl-[38px]", kind: "detail" },
  { t: "Arbeitsblätter", ind: "pl-[38px]", kind: "work" },
  { t: "3D-Dokumente", ind: "pl-[38px]", kind: "doc3" },
  { t: "3D", ind: "pl-[38px]", kind: "d3", chev: "closed" },
  { t: "Vorentwurfsplanung", ind: "pl-[26px]", kind: "folder", chev: "closed" },
  { t: "Entwurfsplanung", ind: "pl-[26px]", kind: "folder", chev: "closed" },
  { t: "Genehmigungsplanung", ind: "pl-[26px]", kind: "folder", chev: "closed" },
];

function TreeIcon({ kind }: { kind: string }) {
  const short = <path d="M2 21v-5h2M3 17h3" stroke="#222" strokeWidth="2" />;
  if (kind === "folder")
    return <Ic s={16} c="text-[#444]"><path d="M2 4h6l2 2h10v14H2zM2 8h18" fill="#e9e9e9" /></Ic>;
  if (kind === "home")
    return <Ic s={17} c="text-[#2f8ff0]"><rect x="1" y="2" width="20" height="18" rx="2" fill="#eef5fd" /><path d="M5 17v-6l5-4 7 3v7zM5 11h12M11 11v6" stroke="#333" strokeWidth="1" /></Ic>;
  if (kind === "story" || kind === "storyL")
    return <Ic s={17} c="text-[#2f8ff0]"><path d="M2 3h8v7h10v9H2z" /><path d="M5 3v4h3" strokeWidth="1" />{kind === "storyL" && short}</Ic>;
  if (kind === "table")
    return <Ic s={16} c="text-[#2f8ff0]"><rect x="3" y="1" width="16" height="20" fill="#eef5fd" /><path d="M3 6h16M3 11h16M3 16h16M8.500 1v20M13.500 1v20" /></Ic>;
  if (kind === "elev")
    return <Ic s={17} c="text-[#2f8ff0]"><path d="M3 19V8l8-5 8 5v11M3 8h16" />{short}</Ic>;
  if (kind === "inner")
    return <Ic s={17} c="text-[#2f8ff0]"><rect x="2" y="3" width="18" height="16" /><path d="M10 3v16" /><rect x="13" y="6" width="4" height="4" />{short}</Ic>;
  if (kind === "detail")
    return <Ic s={17} c="text-[#2f8ff0]"><circle cx="11" cy="11" r="9" /><path d="M9 2v18M9 11h11" />{short}</Ic>;
  if (kind === "work")
    return <Ic s={17} c="text-[#2f8ff0]"><path d="M2 9 8 3h12v16H2z" /><path d="m9 14 6-7 2 2-6 6z" strokeWidth="1" />{short}</Ic>;
  if (kind === "doc3")
    return <Ic s={17} c="text-[#2f8ff0]"><rect x="2" y="3" width="18" height="16" /><path d="M7 9l5-3 5 3v6l-5 3-5-3zM7 9l5 3 5-3M12 12v6" strokeWidth="1" />{short}</Ic>;
  return <Ic s={17} c="text-[#2f8ff0]"><path d="M3 5l9-3h8v16l-8 2H3zM12 2v18" />{short}</Ic>;
}

function Tree() {
  return (
    <div className="h-[360px] ml-[1px] bg-white relative overflow-hidden">
      <div className="h-[350px] overflow-hidden pr-[10px] pl-[1px]">
        {rows.map((r) => (
          <div key={r.t} className={`h-[20px] flex items-center whitespace-nowrap overflow-hidden ${r.ind} ${r.sel ? "bg-[#d4d4d4] font-bold text-[#111]" : "text-[#333]"}`}>
            <span className="w-[11px] flex justify-center shrink-0">
              {r.chev === "open" && <svg width="9" height="6" viewBox="0 0 9 6" fill="none" stroke="#888" strokeWidth="1.1"><path d="m1 1 3.500 3.500L8 1" /></svg>}
              {r.chev === "closed" && <svg width="6" height="9" viewBox="0 0 6 9" fill="none" stroke="#888" strokeWidth="1.1"><path d="m1 1 3.500 3.500L1 8" /></svg>}
            </span>
            <TreeIcon kind={r.kind} />
            <span className="ml-[3px]">{r.t}</span>
          </div>
        ))}
      </div>
      <div className="absolute right-0 top-[2px] w-[7px] h-[235px] rounded-[4px] bg-[#c2c2c2]" />
      <div className="h-[10px] bg-[#fafafa] pl-[2px] pt-[1px]"><div className="h-[7px] w-[89px] rounded-[4px] bg-[#c2c2c2]" /></div>
    </div>
  );
}

function RightPanel() {
  return (
    <div className="w-[153px] shrink-0 text-[10px] text-[#333] border-l border-[#dcdcdc]">
      <div className="h-[4px]" />
      <div className="w-[59px] h-px bg-[#bdbdbd] ml-[49px]" />
      <div className="h-[3px]" />
      <div className="h-[24px] flex items-center pl-[5px]">
        <Ic s={20} c="text-[#444]"><path d="M2 18V9l6-5 12 4v10zM2 9h18M11 9v9" /></Ic>
        <div className="w-px h-[16px] bg-[#cfcfcf] ml-[7px]" />
        <div className="w-[24px] h-[24px] ml-[5px] rounded-[4px] bg-[#b3b3b3] flex items-center justify-center shrink-0"><Ic s={20} c="text-[#333]"><rect x="1" y="3" width="20" height="16" /><path d="M4 17v-6l6-4 8 3v7zM4 11h14" strokeWidth="1" /></Ic></div>
        <Ic s={20} c="text-[#444]" className="ml-[3px]"><path d="M3 18V8l5-5h2v12H3zM10 6h10v12H6" /></Ic>
        <Ic s={20} c="text-[#444]" className="ml-[5px]"><rect x="3" y="2" width="13" height="13" /><rect x="6" y="5" width="13" height="15" /></Ic>
        <div className="w-[27px] h-[18px] ml-[15px] rounded-l-[4px] bg-white flex items-center pl-[5px] shrink-0">
          <Ic s={18} c="text-[#444]"><path d="M2 6h13M2 11h13M2 16h13" /><path d="m18 8 3 3-3 3" /></Ic>
        </div>
      </div>
      <div className="h-[16px] mt-[6px] ml-[4px] bg-white flex items-center pl-[4px]">
        <Ic s={14} c="text-[#222]"><circle cx="9" cy="9" r="6" strokeWidth="1.600" /><path d="m13 13 6 6" strokeWidth="2" /></Ic>
        <span className="ml-[5px] text-[#a8a8a8] whitespace-nowrap">Ausschnitt-Mappe durch</span>
      </div>
      <div className="h-[4px]" />
      <Tree />
      <div className="h-[24px] mt-[5px] flex items-center pl-[3px]">
        <Ic s={18} c="text-[#333]" className="ml-[1px]"><rect x="2" y="7" width="13" height="12" /><path d="M4 17v-4l4-3 5 2v5z" strokeWidth="1" /><circle cx="16" cy="6" r="4.500" stroke={BB} fill="#e8e8e8" /><path d="M14 6h4M16 4v4" stroke={BB} strokeWidth="1" /></Ic>
        <Ic s={18} c="text-[#333]" className="ml-[10px]"><rect x="2" y="7" width="13" height="12" /><path d="M2 21v-4" strokeWidth="2" /><circle cx="16" cy="6" r="4.500" stroke={BB} fill="#e8e8e8" /><path d="M14 6h4M16 4v4" stroke={BB} strokeWidth="1" /></Ic>
        <Ic s={18} c="text-[#333]" className="ml-[10px]"><path d="M2 7h5l2 2h6v10H2z" /><circle cx="16" cy="6" r="4.500" stroke={BB} fill="#e8e8e8" /><path d="M14 6h4M16 4v4" stroke={BB} strokeWidth="1" /></Ic>
        <Ic s={16} c="text-[#2f8ff0]" className="ml-[7px]"><rect x="2" y="4" width="18" height="14" fill="#d9e9fb" /><path d="M2 8h18M5 11h2M9 11h8M5 14h2M9 14h8" strokeWidth="1" /></Ic>
        <svg width="12" height="12" viewBox="0 0 12 12" stroke="#f08080" strokeWidth="1.5" className="ml-[11px]"><path d="m1 1 10 10M11 1 1 11" /></svg>
      </div>
      <Head label="Beschreibungen" className="mt-[3px] ml-[3px] rounded-r-none" />
      <div className="h-[13px] mt-[4px] flex items-center pl-[4px]">
        <Ic s={15} c="text-[#2f8ff0]"><rect x="2" y="3" width="18" height="16" fill="#d9e9fb" /><path d="M2 8h18M2 13h18M8 3v16M14 3v16" /></Ic>
        <div className="w-[25px] h-[13px] ml-[2px] bg-white pl-[3px] leading-[13px]">0</div>
        <div className="flex-1 h-[13px] ml-[4px] bg-white pl-[3px] leading-[13px] overflow-hidden whitespace-nowrap">Dämmungsschichtdick</div>
      </div>
      <div className="h-[18px] mt-[1px] flex items-center pl-[4px] text-[#9a9a9a]">
        <Ic s={15} c="text-[#999]"><path d="m2 8 9-4 9 4-9 4zM2 11l9 4 9-4M2 14l9 4 9-4" /></Ic>
        <span className="ml-[1px]">keine Daten</span>
      </div>
      <div className="h-[18px] flex items-center pl-[4px]">
        <Ic s={15} c="text-[#333]"><path d="M1 7h20v7H1zM5 12v2M9 11v3M13 12v2M17 11v3" /></Ic>
        <span className="ml-[1px]">1:50</span>
      </div>
      <div className="h-[17px] flex items-center pl-[4px]">
        <Ic s={15} c="text-[#333]"><rect x="1" y="4" width="20" height="14" /><rect x="5" y="8" width="12" height="6" /></Ic>
        <span className="ml-[1px]">00 Arbeitseinstellung</span>
      </div>
      <div className="h-[17px] mt-[2px] ml-[4px] rounded-l-[4px] bg-white flex items-center justify-center text-[#222]">Einstellungen...</div>
      <div className="w-[59px] h-px bg-[#bdbdbd] ml-[49px] mt-[7px]" />
      <div className="h-[24px] mt-[3px] ml-[4px] flex gap-[2px]">
        <div className="w-[23px] rounded-[4px] bg-[#efefef] flex items-center justify-center"><Ic s={18} c="text-[#aaa]"><rect x="3" y="3" width="12" height="12" /><rect x="7" y="7" width="12" height="12" stroke="#b5d2f0" /></Ic></div>
        <div className="flex-1 rounded-l-[4px] bg-[#efefef] flex items-center pl-[3px] text-[#aaa]">
          <Ic s={17} c="text-[#aaa]"><path d="M2 3h8v7h10v9H2z" /></Ic>
          <span className="ml-[3px] flex-1">0. EG</span>
          <Gt c="#999" className="mr-[2px]" />
        </div>
      </div>
      <div className="h-[24px] mt-[3px] flex items-center pl-[6px]">
        <Ic s={18} c="text-[#999]"><rect x="2" y="2" width="12" height="12" fill="#ddd" /><rect x="8" y="8" width="12" height="12" stroke={BL} /><path d="M5 5l9 9M5 9V5h4M14 10v4h-4" /></Ic>
        <Ic s={18} c="text-[#999]" className="ml-[35px]"><rect x="2" y="2" width="14" height="13" stroke={BL} /><path d="M15 12v9M11 16h9M15 12l-1 2h2zM15 21l-1-2h2z" /></Ic>
        <Ic s={18} c="text-[#999]" className="ml-[8px]"><path d="m5 4 12-2 3 11-12 3z" stroke={BL} /><path d="M2 11c0 4 3 8 9 8l-2 2M11 19l-2-2" /></Ic>
        <Ic s={18} c="text-[#999]" className="ml-[4px]"><rect x="2" y="2" width="13" height="13" stroke={BL} /><rect x="7" y="7" width="13" height="13" stroke={BL} /><path d="m9 10 5 5M9 13v-3h3" /></Ic>
        <Ic s={18} c="text-[#999]" className="ml-[7px]"><circle cx="11" cy="11" r="9" /><path d="M6 9c2-3 7-3 9-1l1-2v3h-3M16 13c-2 3-7 3-9 1l-1 2v-3h3" /></Ic>
      </div>
      <div className="h-px bg-[#d4d4d4] mt-[5px] ml-[3px]" />
      <div className="h-[16px] mt-[4px] ml-[4px] text-[#8a8a8a] flex items-center">Transparentpause:</div>
      <Slider swatch={<span className="w-[10px] h-[10px] bg-[#f28a8a]" />} more />
      <div className="h-[20px] mt-[2px] ml-[4px] text-[#8a8a8a] flex items-center">Aktiv:</div>
      <Slider swatch={<span className="w-[11px] h-[11px] rounded-full bg-[conic-gradient(#d9737a_0_35%,#6aa1d8_35%_65%,#5aa36e_65%)]" />} />
      <div className="h-px bg-[#d4d4d4] mt-[8px] ml-[3px]" />
      <div className="h-[24px] mt-[3px] flex items-center pl-[32px] gap-[7px]">
        <Ic s={18} c="text-[#999]"><rect x="2" y="2" width="12" height="12" stroke={BL} /><path d="M11 20v-6a1 1 0 0 1 2 0v3-1a1 1 0 0 1 2 0v1a1 1 0 0 1 2 0 1 1 0 0 1 2 0v4h-6z" /></Ic>
        <Ic s={18} c="text-[#999]"><rect x="2" y="2" width="13" height="13" /><rect x="7" y="7" width="13" height="13" stroke={BL} /><path d="M15 11v4h-4" /></Ic>
        <Ic s={18} c="text-[#999]"><rect x="2" y="3" width="18" height="16" /><path d="M11 1v20" stroke={BL} /><path d="m7 9-2 2 2 2M15 9l2 2-2 2" /></Ic>
        <Ic s={18} c="text-[#999]"><rect x="2" y="2" width="14" height="14" fill="#ccc" /><path d="M4 13 14 3M2 10l8-8M9 18c3-4 8-4 11-1-3 3-8 3-11 1z" /></Ic>
      </div>
    </div>
  );
}

function Slider({ swatch, more = false }: { swatch: React.ReactNode; more?: boolean }) {
  const tick = [0, 1, 2, 3, 4, 5, 6, 7, 8, 9];
  return (
    <div className="h-[22px] ml-[4px] flex items-center">
      <div className="w-[24px] h-[22px] rounded-[4px] bg-[#efefef] flex items-center pl-[3px] gap-[2px]">
        {swatch}
        <Gt c="#888" />
      </div>
      <div className="w-[108px] h-[22px] ml-[3px] flex items-center justify-between relative">
        <div className="absolute left-0 right-[4px] top-[10.500px] h-px bg-[#d2d2d2]" />
        <div className="flex justify-between w-[104px]">{tick.map((t) => <span key={t} className="w-px h-[5px] bg-[#c6c6c6]" />)}</div>
        <div className="absolute right-0 top-[4px] w-[7px] h-[13px] rounded-[3px] bg-[#f2f2f2]" />
      </div>
      {more && <div className="w-[11px] h-[22px] ml-[2px] rounded-l-[4px] bg-[#efefef] flex items-center justify-center"><Gt c="#888" /></div>}
    </div>
  );
}

function StatusBar() {
  return (
    <div className="h-[19px] bg-[#ebebeb] flex items-center pl-[5px] shrink-0 text-[10px] text-[#333] tracking-[0.07px] whitespace-nowrap">
      <span className="flex-1">Klicken Sie mit dem Cursor auf ein Element oder ziehen Sie einen Auswahlbereich auf. Drücken Sie für Morphbearbeitung Strg/Ctrl+Umsch, um zwischen Element-/Unterelement-Auswahl zu wechseln.</span>
      <Ic s={16} c="text-[#222]" className="mr-[8px]"><rect x="5" y="3" width="14" height="12" /><rect x="2" y="7" width="14" height="12" fill="#ebebeb" strokeWidth="1.400" /><path d="M2 10h14" strokeWidth="1.400" /></Ic>
      <div className="w-px h-[12px] bg-[#999] mr-[8px]" />
      <span className="font-['Lato',sans-serif] text-[11px] font-medium tracking-normal text-[#333] pr-[8px]">GRAPHISOFT <span className="font-light text-[#555]">ID</span></span>
    </div>
  );
}

export default function App() {
  return (
    <div className={`w-[1600px] h-[854px] overflow-hidden bg-[#e8e8e8] flex flex-col ${F}`}>
      <TopToolbar />
      <HauptRow />
      <div className="flex h-[753px] shrink-0">
        <Sidebar />
        <div className="flex-1 flex flex-col min-w-0">
          <TabBar />
          <div className="flex flex-1 min-h-0">
            <Panel />
            <div className="w-[5px] bg-[#dcdcdc] flex items-center justify-center"><span className="block w-0 h-0 border-t-[4px] border-b-[4px] border-r-[4px] border-t-transparent border-b-transparent border-r-[#999]" /></div>
            <Center />
          </div>
        </div>
        <RightPanel />
      </div>
      <StatusBar />
    </div>
  );
}
